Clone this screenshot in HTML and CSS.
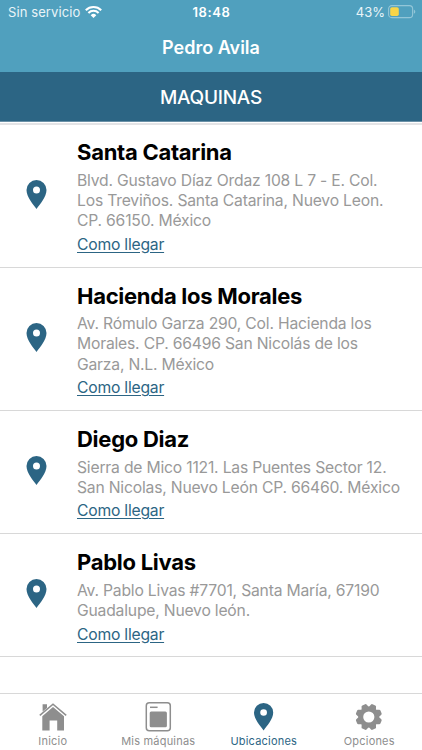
FILE: index.html
```
<!DOCTYPE html>
<html lang="es">
<head>
  <meta charset="UTF-8" />
  <title>Maquinas</title>
  <link rel="stylesheet" href="styles.css">
</head>
<body>
  <header class="top">
    <div class="status">
      <div class="status-left">
        <span class="carrier">Sin servicio</span>
        <svg class="wifi" viewBox="0 0 17 12">
          <path d="M0.8 4.2 A11 11 0 0 1 16.2 4.2" />
          <path d="M3.4 6.9 A7.2 7.2 0 0 1 13.6 6.9" />
          <path class="wifi-dot" d="M8.5 12 L5.7 9.2 A4 4 0 0 1 11.3 9.2 Z" />
        </svg>
      </div>
      <span class="clock">18:48</span>
      <div class="status-right">
        <span class="percent">43%</span>
        <svg class="battery" viewBox="0 0 28 14">
          <rect class="battery-case" x="0.6" y="0.6" width="24" height="12" rx="3.2" />
          <rect class="battery-level" x="2.2" y="2.2" width="8.6" height="8.8" rx="1.8" />
          <path class="battery-tip" d="M25.8 4.6 Q27.3 5.4 27.3 6.7 Q27.3 8 25.8 8.8 Z" />
        </svg>
      </div>
    </div>
    <h1 class="user">Pedro Avila</h1>
  </header>
  <h2 class="section">MAQUINAS</h2>

  <main class="list">
    <article class="place">
      <svg class="pin" viewBox="0 0 20 29"><path d="M10 0 A10 10 0 0 1 20 10 C20 17 13.5 24 10 29 C6.5 24 0 17 0 10 A10 10 0 0 1 10 0 Z M10 6.6 A3.5 3.5 0 1 0 10 13.6 A3.5 3.5 0 1 0 10 6.6 Z" /></svg>
      <div class="info">
        <h3 class="name">Santa Catarina</h3>
        <p class="address">Blvd. Gustavo Díaz Ordaz 108 L 7 - E. Col.<br>Los Treviños. Santa Catarina, Nuevo Leon.<br>CP. 66150. México</p>
        <a class="link" href="#">Como llegar</a>
      </div>
    </article>
    <article class="place">
      <svg class="pin" viewBox="0 0 20 29"><path d="M10 0 A10 10 0 0 1 20 10 C20 17 13.5 24 10 29 C6.5 24 0 17 0 10 A10 10 0 0 1 10 0 Z M10 6.6 A3.5 3.5 0 1 0 10 13.6 A3.5 3.5 0 1 0 10 6.6 Z" /></svg>
      <div class="info">
        <h3 class="name">Hacienda los Morales</h3>
        <p class="address">Av. Rómulo Garza 290, Col. Hacienda los<br>Morales. CP. 66496 San Nicolás de los<br>Garza, N.L. México</p>
        <a class="link" href="#">Como llegar</a>
      </div>
    </article>
    <article class="place">
      <svg class="pin" viewBox="0 0 20 29"><path d="M10 0 A10 10 0 0 1 20 10 C20 17 13.5 24 10 29 C6.5 24 0 17 0 10 A10 10 0 0 1 10 0 Z M10 6.6 A3.5 3.5 0 1 0 10 13.6 A3.5 3.5 0 1 0 10 6.6 Z" /></svg>
      <div class="info">
        <h3 class="name">Diego Diaz</h3>
        <p class="address">Sierra de Mico 1121. Las Puentes Sector 12.<br>San Nicolas, Nuevo León CP. 66460. México</p>
        <a class="link" href="#">Como llegar</a>
      </div>
    </article>
    <article class="place">
      <svg class="pin" viewBox="0 0 20 29"><path d="M10 0 A10 10 0 0 1 20 10 C20 17 13.5 24 10 29 C6.5 24 0 17 0 10 A10 10 0 0 1 10 0 Z M10 6.6 A3.5 3.5 0 1 0 10 13.6 A3.5 3.5 0 1 0 10 6.6 Z" /></svg>
      <div class="info">
        <h3 class="name">Pablo Livas</h3>
        <p class="address">Av. Pablo Livas #7701, Santa María, 67190<br>Guadalupe, Nuevo león.</p>
        <a class="link" href="#">Como llegar</a>
      </div>
    </article>
  </main>

  <nav class="tabs">
    <a class="tab" href="#">
      <svg class="tab-icon" viewBox="0 0 30 30">
        <path d="M4.6 2.3 H9 V6 L4.6 9.6 Z" />
        <path class="roof" d="M1.8 13.3 L15 2.2 L28.2 13.3" />
        <path d="M15 5 L26 14.2 V28.4 H19.2 V18.6 H11.6 V28.4 H4.3 V14.2 Z" />
      </svg>
      <span>Inicio</span>
    </a>
    <a class="tab" href="#">
      <svg class="tab-icon" viewBox="0 0 30 30">
        <rect class="outline" x="3.3" y="0.8" width="24" height="28" rx="3" />
        <path class="outline" d="M7 5.3 H14.6" />
        <rect x="6.7" y="9.6" width="17.2" height="15.6" rx="1.5" />
      </svg>
      <span>Mis máquinas</span>
    </a>
    <a class="tab active" href="#">
      <svg class="tab-icon" viewBox="0 0 30 30"><path transform="translate(5 1) scale(.96 .945)" d="M10 0 A10 10 0 0 1 20 10 C20 17 13.5 24 10 29 C6.5 24 0 17 0 10 A10 10 0 0 1 10 0 Z M10 6.6 A3.5 3.5 0 1 0 10 13.6 A3.5 3.5 0 1 0 10 6.6 Z" /></svg>
      <span>Ubicaciones</span>
    </a>
    <a class="tab" href="#">
      <svg class="tab-icon" viewBox="0 0 30 30">
        <g transform="translate(14.8 15)">
          <circle class="gear-ring" r="8" />
          <path id="tooth" transform="rotate(22.5)" d="M-4 -9 L-2.7 -12.4 Q-2.4 -13.2 -1.5 -13.2 H1.5 Q2.4 -13.2 2.7 -12.4 L4 -9 Z" />
          <use href="#tooth" transform="rotate(45)" />
          <use href="#tooth" transform="rotate(90)" />
          <use href="#tooth" transform="rotate(135)" />
          <use href="#tooth" transform="rotate(180)" />
          <use href="#tooth" transform="rotate(225)" />
          <use href="#tooth" transform="rotate(270)" />
          <use href="#tooth" transform="rotate(315)" />
        </g>
      </svg>
      <span>Opciones</span>
    </a>
  </nav>
</body>
</html>
```
FILE: styles.css
```
* {
  box-sizing: border-box;
}
body {
  margin: 0;
  height: 750px;
  display: flex;
  flex-direction: column;
  overflow: hidden;
  font-family: Inter, "Liberation Sans", sans-serif;
  background: #fff;
}
h1, h2, h3, p {
  margin: 0;
}
svg {
  display: block;
}
.top {
  height: 72px;
  background: #50a0be;
  color: #fff;
}
.status {
  display: grid;
  grid-template-columns: 1fr auto 1fr;
  align-items: center;
  height: 24px;
  padding: 0 7px 0 8px;
  font-size: 13px;
  line-height: 24px;
}
.status-left, .status-right {
  display: flex;
  align-items: center;
  color: #e9f4f8;
}
.status-left {
  gap: 5px;
}
.status-right {
  justify-content: flex-end;
  gap: 3px;
  margin-right: -1px;
}
.carrier {
  letter-spacing: 0.1px;
}
.percent {
  letter-spacing: 0;
}
.clock {
  font-weight: 600;
  letter-spacing: 0.6px;
}
.wifi {
  width: 17px;
  height: 12px;
  fill: none;
  stroke: #fff;
  stroke-width: 2.1;
}
.wifi-dot {
  fill: #fff;
  stroke: none;
}
.battery {
  width: 28px;
  height: 14px;
}
.battery-case {
  fill: none;
  stroke: #93c6d8;
  stroke-width: 1.1;
}
.battery-tip {
  fill: #93c6d8;
}
.battery-level {
  fill: #f8d548;
}
.user {
  font-size: 18px;
  font-weight: 600;
  line-height: 47px;
  text-align: center;
}
.section {
  height: 50px;
  background: #2c6584;
  border-bottom: 1px solid #6b91a7;
  color: #fff;
  font-size: 19px;
  font-weight: 500;
  letter-spacing: -0.25px;
  line-height: 51px;
  text-align: center;
}
.list {
  flex: 1;
  margin-top: 1px;
  padding-top: 1.2px;
  box-shadow: inset 0 2px 0 #e4e4e6;
}
.place {
  display: flex;
  align-items: center;
  padding: 13.2px 0 11.9px;
  border-bottom: 1px solid #d8d8d8;
}
.pin {
  width: 21px;
  height: 29px;
  margin: 0 30px 4px 26px;
  fill: #2c6584;
}
.name {
  margin-bottom: 3.3px;
  font-size: 22px;
  font-weight: 700;
  letter-spacing: -0.27px;
  line-height: 30px;
  color: #000;
}
.address {
  font-size: 15.7px;
  letter-spacing: -0.2px;
  line-height: 20.3px;
  color: #999;
  white-space: nowrap;
}
.link {
  display: block;
  margin-top: 3.2px;
  font-size: 15.7px;
  letter-spacing: -0.22px;
  line-height: 20px;
  color: #2c6584;
  text-underline-offset: 2px;
}
.tabs {
  display: grid;
  grid-template-columns: repeat(4, 1fr);
  height: 57px;
  border-top: 1px solid #d8d8d8;
}
.tab {
  display: flex;
  flex-direction: column;
  align-items: center;
  padding-top: 7.5px;
  font-size: 11px;
  line-height: 18px;
  color: #8e8e8e;
  text-decoration: none;
}
.tab span {
  letter-spacing: 0.2px;
}
.tab-icon {
  width: 30px;
  height: 30px;
  fill: currentColor;
}
.roof {
  fill: none;
  stroke: currentColor;
  stroke-width: 1.6;
}
.outline, .gear-ring {
  fill: none;
  stroke: currentColor;
  stroke-width: 1.5;
}
.gear-ring {
  stroke-width: 4.8;
}
.tab.active {
  color: #2c6584;
}
```
